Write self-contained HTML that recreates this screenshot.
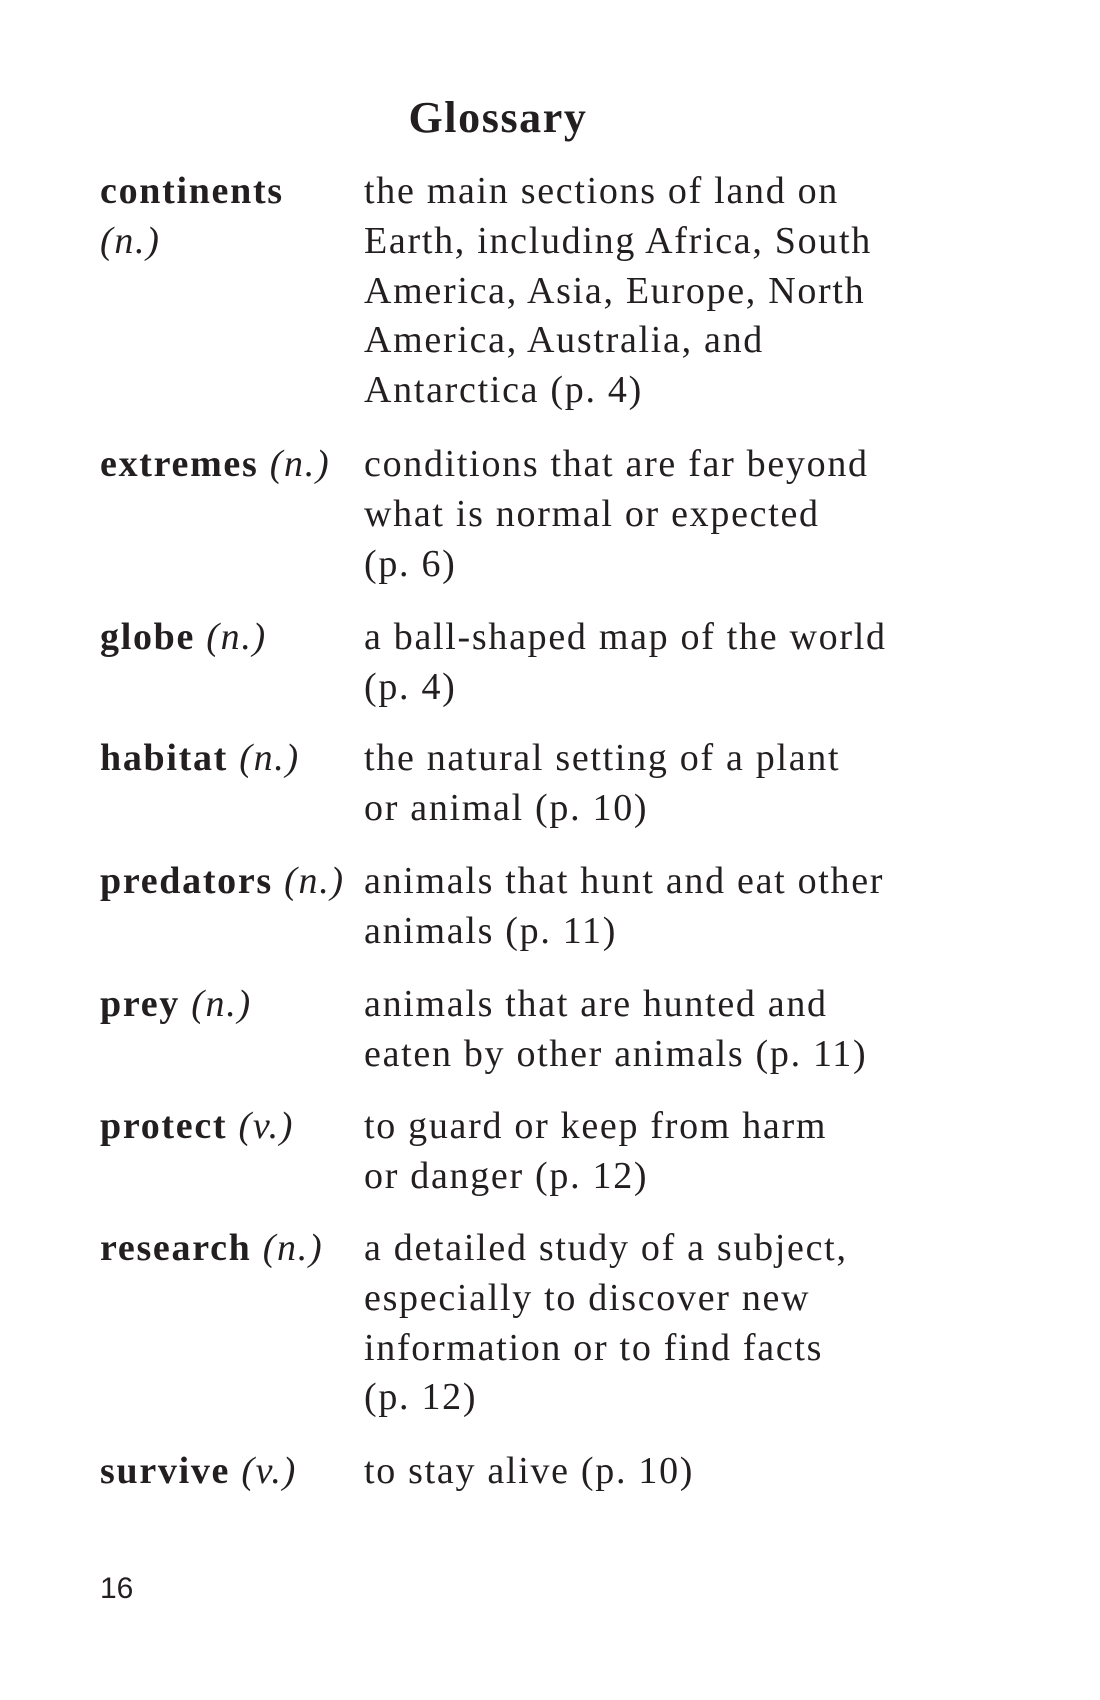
<!DOCTYPE html>
<html><head><meta charset="utf-8"><style>
html,body{margin:0;padding:0;background:#fff;}
body{width:1100px;height:1700px;position:relative;font-family:"Liberation Serif",serif;color:#231f20;}
.t{position:absolute;left:3px;width:990px;text-align:center;top:94px;font-size:44px;letter-spacing:1.6px;font-weight:bold;line-height:48px;}
.r{position:absolute;left:0;width:1100px;font-size:38px;letter-spacing:1.7px;line-height:49.8px;}
.k{position:absolute;left:100px;}
.k b{font-weight:bold;}
.d{position:absolute;left:364px;white-space:nowrap;}
.pn{position:absolute;left:100px;top:1572px;font-family:"Liberation Sans",sans-serif;font-size:30px;}
</style></head><body>
<div class="t">Glossary</div>
<div class="r" style="top:167px"><div class="k"><b>continents</b><br><i>(n.)</i></div><div class="d">the main sections of land on<br>Earth, including Africa, South<br>America, Asia, Europe, North<br>America, Australia, and<br>Antarctica (p. 4)</div></div>
<div class="r" style="top:440px"><div class="k"><b>extremes</b> <i>(n.)</i></div><div class="d">conditions that are far beyond<br>what is normal or expected<br>(p. 6)</div></div>
<div class="r" style="top:613px"><div class="k"><b>globe</b> <i>(n.)</i></div><div class="d">a ball-shaped map of the world<br>(p. 4)</div></div>
<div class="r" style="top:734px"><div class="k"><b>habitat</b> <i>(n.)</i></div><div class="d">the natural setting of a plant<br>or animal (p. 10)</div></div>
<div class="r" style="top:857px"><div class="k"><b>predators</b> <i>(n.)</i></div><div class="d">animals that hunt and eat other<br>animals (p. 11)</div></div>
<div class="r" style="top:980px"><div class="k"><b>prey</b> <i>(n.)</i></div><div class="d">animals that are hunted and<br>eaten by other animals (p. 11)</div></div>
<div class="r" style="top:1102px"><div class="k"><b>protect</b> <i>(v.)</i></div><div class="d">to guard or keep from harm<br>or danger (p. 12)</div></div>
<div class="r" style="top:1224px"><div class="k"><b>research</b> <i>(n.)</i></div><div class="d">a detailed study of a subject,<br>especially to discover new<br>information or to find facts<br>(p. 12)</div></div>
<div class="r" style="top:1447px"><div class="k"><b>survive</b> <i>(v.)</i></div><div class="d">to stay alive (p. 10)</div></div>
<div class="pn">16</div>
</body></html>
